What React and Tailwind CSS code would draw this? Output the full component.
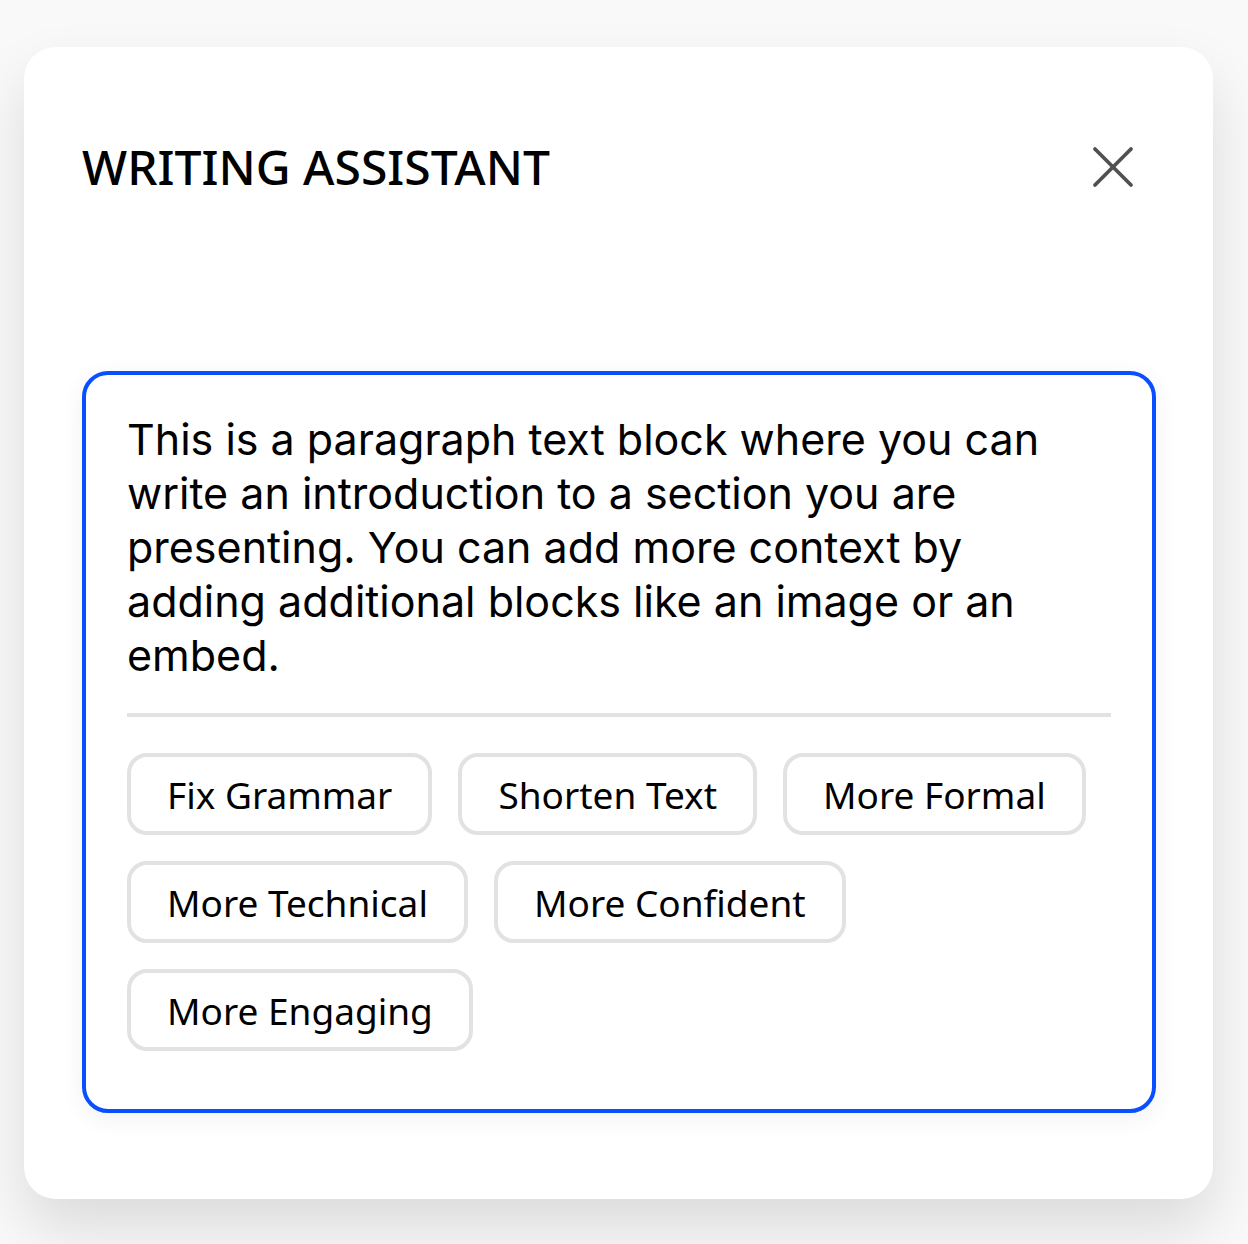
import React from "react";

const chips = [
  ["Fix Grammar", "Shorten Text", "More Formal"],
  ["More Technical", "More Confident"],
  ["More Engaging"],
];

function Chip({ label }) {
  return (
    <button className="h-[82px] px-[36px] rounded-[20px] border-4 border-[#e2e2e2] bg-white text-[37px] leading-none text-black [font-family:'Noto_Sans',sans-serif]">
      {label}
    </button>
  );
}

export default function App() {
  return (
    <div className="min-h-[1244px] bg-[#f9f9f9] pt-[47px] pl-[24px] pr-[35px]">
      <div className="w-[1189px] h-[1152px] bg-white rounded-[32px] shadow-[0_30px_60px_rgba(0,0,0,0.12)] px-[58px] pt-[85px]">
        <div className="flex items-center justify-between h-[70px]">
          <h1 className="text-[48px] font-medium text-black leading-none [font-family:'Noto_Sans',sans-serif]">
            WRITING ASSISTANT
          </h1>
          <button className="mr-[21px] text-[#505050]" aria-label="Close">
            <svg width="42" height="42" viewBox="0 0 42 42" fill="none" stroke="currentColor" strokeWidth="3.8" strokeLinecap="round">
              <path d="M3 3 L39 39" />
              <path d="M39 3 L3 39" />
            </svg>
          </button>
        </div>
        <div className="mt-[169px] w-[1074px] h-[742px] rounded-[26px] border-4 border-[#0a4fff] shadow-[0_6px_24px_rgba(0,0,0,0.06)] px-[41px] pt-[37px]">
          <p className="text-[43px] leading-[54px] text-black [font-family:Inter,sans-serif]">
            This is a paragraph text block where you can write an introduction to a section you are presenting. You can add more context by adding additional blocks like an image or an embed.
          </p>
          <div className="mt-[31px] h-[4px] bg-[#e2e2e2]" />
          <div className="mt-[36px] flex flex-col gap-[26px]">
            {chips.map((row, i) => (
              <div key={i} className="flex gap-[26px]">
                {row.map((c) => (
                  <Chip key={c} label={c} />
                ))}
              </div>
            ))}
          </div>
        </div>
      </div>
    </div>
  );
}
